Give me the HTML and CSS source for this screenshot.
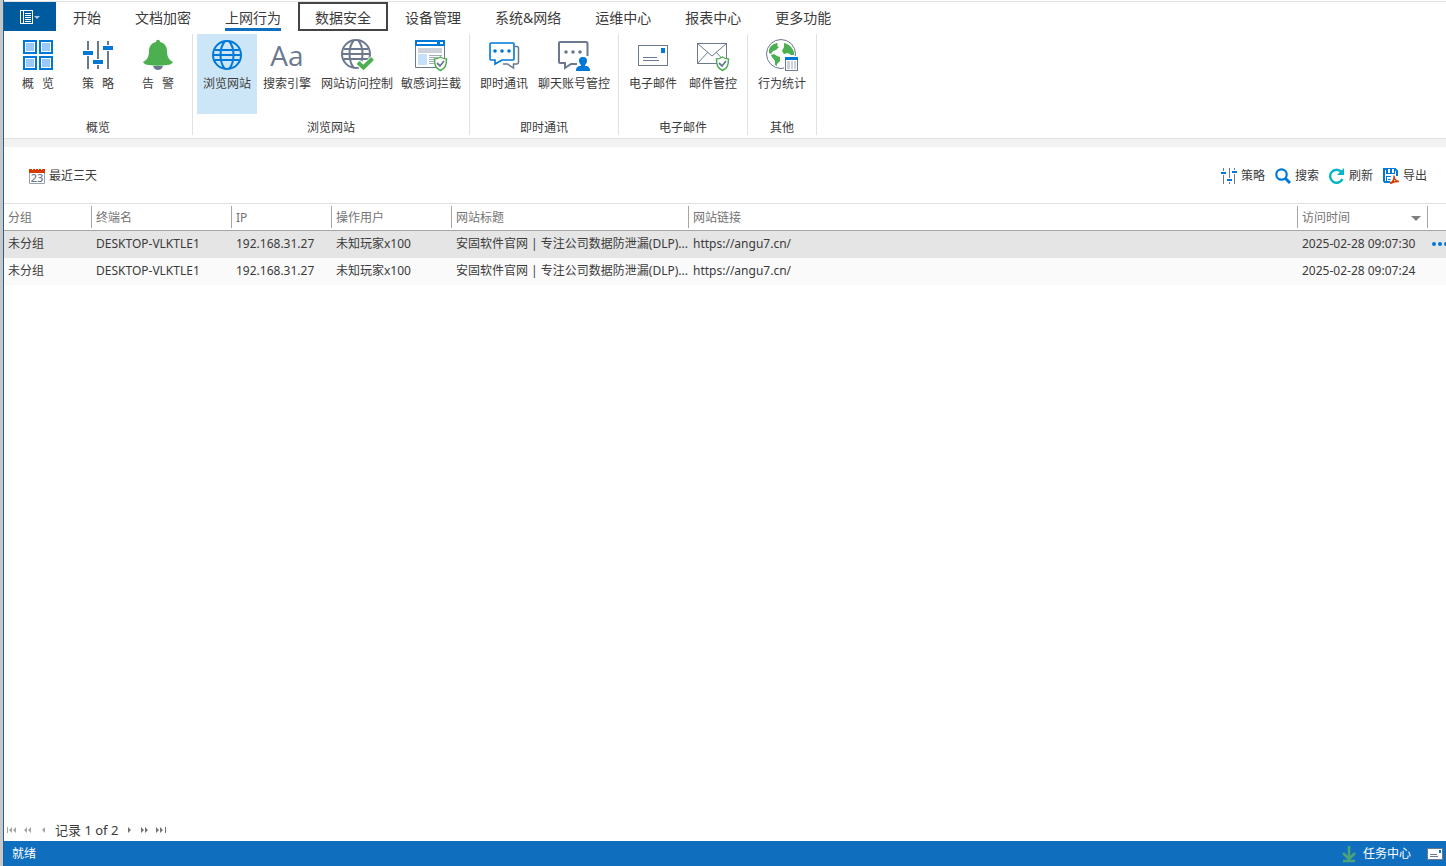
FILE: index.html
```html
<!DOCTYPE html>
<html lang="zh-CN">
<head>
<meta charset="UTF-8">
<meta name="viewport" content="width=device-width, initial-scale=1.0">
<title>上网行为 - 浏览网站</title>
<link rel="stylesheet" href="styles.css">
</head>
<body>
  <div class="app">
    <nav class="tabs">
      <button class="file-btn" aria-label="文件">
        <svg width="22" height="16" viewBox="0 0 22 16">
          <rect x="1.5" y="1.5" width="12" height="13" fill="none" stroke="#fff"/>
          <path d="M4.5 1v14M6 4.5h6M6 6.5h6M6 8.5h6M6 10.5h6M6 12.5h6" stroke="#fff"/>
          <path d="M15 7h6l-3 3z" fill="#a9cbe8"/>
        </svg>
      </button>
      <button class="tab">开始</button>
      <button class="tab">文档加密</button>
      <button class="tab active"><span>上网行为</span></button>
      <button class="tab focused">数据安全</button>
      <button class="tab">设备管理</button>
      <button class="tab">系统&amp;网络</button>
      <button class="tab">运维中心</button>
      <button class="tab">报表中心</button>
      <button class="tab">更多功能</button>
    </nav>

    <div class="ribbon">
      <section class="group">
        <div class="group-items">
          <button class="item">
            <svg width="32" height="32" viewBox="0 0 32 32">
              <g fill="#fff" stroke="#0078d7" stroke-width="2">
                <rect x="2" y="2" width="12" height="12"/><rect x="18" y="2" width="12" height="12"/>
                <rect x="2" y="18" width="12" height="12"/><rect x="18" y="18" width="12" height="12"/>
              </g>
              <path d="M4 4h8v8H4zM20 4h8v8h-8zM4 20h8v8H4zM20 20h8v8h-8z" fill="#99c9ff"/>
            </svg>
            <span>概&emsp13;&emsp13;览</span>
          </button>
          <button class="item">
            <svg width="32" height="32" viewBox="0 0 32 32">
              <path d="M6 2v9M6 17v13M16 2v18M16 26v4M26 2v4M26 12v18" stroke="#6b798f" stroke-width="2"/>
              <path d="M1 12h10v4H1zM11 21h10v4H11zM21 7h10v4H21z" fill="#0078d7"/>
            </svg>
            <span>策&emsp13;&emsp13;略</span>
          </button>
          <button class="item">
            <svg width="32" height="32" viewBox="0 0 32 32">
              <path d="M11 27h10c-1 3-3 4-5 4s-4-1-5-4z" fill="#6b798f"/>
              <path d="M14 3c0-3 4-3 4 0 5 1 7 5 7 9 0 6 2 9 6 11-1 2-3 3-6 3-6 1-12 1-18 0-3 0-5-1-6-3 4-2 6-5 6-11 0-4 2-8 7-9z" fill="#4caf50"/>
            </svg>
            <span>告&emsp13;&emsp13;警</span>
          </button>
        </div>
        <h2>概览</h2>
      </section>

      <section class="group">
        <div class="group-items">
          <button class="item selected">
            <svg width="32" height="32" viewBox="0 0 32 32">
              <g fill="none" stroke="#0078d7" stroke-width="2">
                <circle cx="16" cy="16" r="14"/>
                <path d="M14 2C8 9 8 23 14 30M18 2c6 7 6 21 0 28M4 11h24M2 16h28M4 21h24"/>
              </g>
            </svg>
            <span>浏览网站</span>
          </button>
          <button class="item">
            <span class="letters" aria-hidden="true">Aa</span>
            <span>搜索引擎</span>
          </button>
          <button class="item">
            <svg width="32" height="32" viewBox="0 0 32 32">
              <g fill="none" stroke="#6b798f" stroke-width="2">
                <circle cx="15" cy="15" r="14"/>
                <path d="M13 1C7 8 7 22 13 29M17 1c6 7 6 21 0 28M3 10h24M1 15h28M3 20h24"/>
              </g>
              <path d="M18 24l5 5 9-9" fill="none" stroke="#fff" stroke-width="7"/>
              <path d="M17 23.500l5.500 5 9-9" fill="none" stroke="#4caf50" stroke-width="4"/>
            </svg>
            <span>网站访问控制</span>
          </button>
          <button class="item">
            <svg width="32" height="32" viewBox="0 0 32 32">
              <path d="M.5 6v22.500h29V6" fill="#fff" stroke="#6b798f"/>
              <path d="M0 1h30v6H0z" fill="#0078d7"/>
              <path d="M2 3h20v2H2zM25 3h3v2h-3z" fill="#fff"/>
              <path d="M3 9h24v5H3z" fill="#cdd1d9"/>
              <path d="M3 15h9v11H3z" fill="#c4e0fb"/>
              <path d="M14 16.500h13M14 18.500h9M14 20.500h6M14 22.500h5M14 24.500h5" stroke="#a4adba"/>
              <path d="M25.500 18c2 1.500 4 2 6 2 0 6-1 9-6 11.500-5-2.500-6-5.500-6-11.500 2 0 4-.5 6-2z" fill="#fff" stroke="#4caf50" stroke-width="1.500"/>
              <path d="M22 24l3 3 4-5" fill="none" stroke="#6b798f" stroke-width="1.800"/>
            </svg>
            <span>敏感词拦截</span>
          </button>
        </div>
        <h2>浏览网站</h2>
      </section>

      <section class="group">
        <div class="group-items">
          <button class="item">
            <svg width="32" height="32" viewBox="0 0 32 32">
              <path d="M27 7.500h2q1.500 0 1.500 1.500v14q0 2-2 2h-3v4l-6-4H15" fill="none" stroke="#6b798f" stroke-width="1.500"/>
              <path d="M3 4h22q1 0 1 1v15q0 1-1 1H14l-7 4v-4H3q-1 0-1-1V5q0-1 1-1z" fill="#fff" stroke="#0078d7" stroke-width="1.600"/>
              <g fill="#0078d7"><circle cx="7" cy="12" r="1.800"/><circle cx="14" cy="12" r="1.800"/><circle cx="21" cy="12" r="1.800"/></g>
            </svg>
            <span>即时通讯</span>
          </button>
          <button class="item">
            <svg width="32" height="32" viewBox="0 0 32 32">
              <path d="M19 25h-6l-6 4v-5H2q-1 0-1-1V4q0-1 1-1h26q1.500 0 1.500 1.500V17" fill="none" stroke="#6b798f" stroke-width="2"/>
              <g fill="#6b798f"><circle cx="8" cy="13" r="1.800"/><circle cx="15" cy="13" r="1.800"/><circle cx="22" cy="13" r="1.800"/></g>
              <path d="M25 18c6 0 4 7 2 8v1c4 0 5 2 5 5H18c0-3 1-5 5-5v-1c-2-1-4-8 2-8z" fill="#0078d7"/>
            </svg>
            <span>聊天账号管控</span>
          </button>
        </div>
        <h2>即时通讯</h2>
      </section>

      <section class="group">
        <div class="group-items">
          <button class="item">
            <svg width="32" height="32" viewBox="0 0 32 32">
              <rect x="1.500" y="6.500" width="29" height="20" fill="#fff" stroke="#6b798f"/>
              <path d="M24 9h4v5h-4z" fill="#0078d7"/>
              <path d="M6 18.500h14M6 21.500h16" stroke="#6b798f"/>
            </svg>
            <span>电子邮件</span>
          </button>
          <button class="item">
            <svg width="32" height="32" viewBox="0 0 32 32">
              <path d="M.5 4.500h29v20H.5zM.5 4.500L15 17 29.500 4.500M.5 24.500L11 13M29.500 24.500L19 13" fill="none" stroke="#6b798f"/>
              <path d="M25.500 18c2 1.500 4 2 6 2 0 6-1 9-6 11.500-5-2.500-6-5.500-6-11.500 2 0 4-.5 6-2z" fill="#fff" stroke="#4caf50" stroke-width="1.500"/>
              <path d="M22 24l3 3 4-5" fill="none" stroke="#6b798f" stroke-width="1.800"/>
            </svg>
            <span>邮件管控</span>
          </button>
        </div>
        <h2>电子邮件</h2>
      </section>

      <section class="group">
        <div class="group-items">
          <button class="item">
            <svg width="32" height="32" viewBox="0 0 32 32">
              <circle cx="15" cy="15" r="14.500" fill="#fff" stroke="#6b798f"/>
              <path d="M3 11c1-4 4-6 8-7 1 1 1 2 0 3l2 1-3 3-3 1-2 3-2-1zM5 16l3-1 3 2 3 1v4l-3 3v2l-2-1v-4c-1-2-3-3-4-6zM18 4c5 1 8 4 10 9v3l-3 0-3-2-4 1-2-3 2-4z" fill="#4caf50"/>
              <rect x="18" y="17" width="15" height="15" fill="#fff"/>
              <rect x="19.500" y="19.500" width="12" height="12" fill="#fff" stroke="#6b798f"/>
              <path d="M19 18h13v3H19z" fill="#0078d7"/>
              <path d="M21 22h3v8h-3zM25 22h2v8h-2zM28 22h2v8h-2z" fill="#cdd1d9"/>
            </svg>
            <span>行为统计</span>
          </button>
        </div>
        <h2>其他</h2>
      </section>
    </div>

    <main class="content">
      <div class="toolbar">
        <button class="tool">
          <svg width="16" height="16" viewBox="0 0 16 16">
            <path d="M.5 2h15v13.500H.5z" fill="#fff" stroke="#98a2b0"/>
            <path d="M0 1h16v4H0z" fill="#d83b01"/>
            <path d="M3.500 0v2M6.500 0v2M9.500 0v2M12.500 0v2" stroke="#fff"/>
            <text x="8" y="14" class="cal-day">23</text>
          </svg>
          最近三天
        </button>
        <div class="tools">
          <button class="tool">
            <svg width="16" height="16" viewBox="0 0 16 16">
              <path d="M2.500 0v3M2.500 7v9M8.500 0v10M8.500 14v2M13.500 0v2M13.500 6v10" stroke="#6b798f"/>
              <path d="M0 4h5v2H0zM6 11h5v2H6zM11 3h5v2h-5z" fill="#0078d7"/>
            </svg>
            策略
          </button>
          <button class="tool">
            <svg width="16" height="16" viewBox="0 0 16 16">
              <circle cx="6.500" cy="6.500" r="5.200" fill="none" stroke="#0078d7" stroke-width="2.200"/>
              <path d="M10 10l5 5" stroke="#0078d7" stroke-width="3"/>
            </svg>
            搜索
          </button>
          <button class="tool">
            <svg width="16" height="16" viewBox="0 0 16 16">
              <path d="M12.500 4A6.500 6.500 0 1 0 13.500 11" fill="none" stroke="#00b7c3" stroke-width="2.400"/>
              <path d="M15 0v7H8z" fill="#00b7c3"/>
            </svg>
            刷新
          </button>
          <button class="tool">
            <svg width="16" height="16" viewBox="0 0 16 16">
              <path d="M1 1h11l2 2v11H2l-1-1z" fill="#fff" stroke="#0078d7" stroke-width="2"/>
              <path d="M3 0h9v6H3zM3 8h10v1H3zM3 8h1v6H3z" fill="#0078d7"/>
              <path d="M5 1h2v4H5zM9 1h2v4H9z" fill="#fff"/>
              <path d="M5 11h3v1H5z" fill="#0078d7"/>
              <path d="M8 8h8v8H7z" fill="#fff"/>
              <path d="M7 15.500c3-1.500 4.500-4.500 4-8 0 3 1.500 5.500 5 6-3.500-.5-6 .5-9 2z" fill="none" stroke="#d83b01" stroke-width="1.500"/>
            </svg>
            导出
          </button>
        </div>
      </div>

      <table class="grid">
        <colgroup>
          <col class="c-group"><col class="c-host"><col class="c-ip"><col class="c-user"><col class="c-title"><col><col class="c-time"><col class="c-more">
        </colgroup>
        <thead>
          <tr>
            <th>分组</th>
            <th>终端名</th>
            <th>IP</th>
            <th>操作用户</th>
            <th>网站标题</th>
            <th>网站链接</th>
            <th><span class="sorted">访问时间</span></th>
            <th></th>
          </tr>
        </thead>
        <tbody>
          <tr class="current">
            <td>未分组</td>
            <td>DESKTOP-VLKTLE1</td>
            <td>192.168.31.27</td>
            <td>未知玩家x100</td>
            <td>安固软件官网 | 专注公司数据防泄漏(DLP)...</td>
            <td>https://angu7.cn/</td>
            <td>2025-02-28 09:07:30</td>
            <td>
              <button class="more" aria-label="更多">
                <svg width="16" height="4" viewBox="0 0 16 4" fill="#0078d7"><circle cx="2" cy="2" r="2"/><circle cx="8" cy="2" r="2"/><circle cx="14" cy="2" r="2"/></svg>
              </button>
            </td>
          </tr>
          <tr>
            <td>未分组</td>
            <td>DESKTOP-VLKTLE1</td>
            <td>192.168.31.27</td>
            <td>未知玩家x100</td>
            <td>安固软件官网 | 专注公司数据防泄漏(DLP)...</td>
            <td>https://angu7.cn/</td>
            <td>2025-02-28 09:07:24</td>
            <td></td>
          </tr>
        </tbody>
      </table>
    </main>

    <div class="pager">
      <button class="page-btn" aria-label="第一页"><svg width="10" height="6" viewBox="0 0 10 6" fill="#a6a6a6"><path d="M0 0h1v6H0zM5 0v6L2 3zM9 0v6L6 3z"/></svg></button>
      <button class="page-btn" aria-label="上一页"><svg width="10" height="6" viewBox="0 0 10 6" fill="#a6a6a6"><path d="M4 0v6L1 3zM8 0v6L5 3z"/></svg></button>
      <button class="page-btn" aria-label="上一条"><svg width="10" height="6" viewBox="0 0 10 6" fill="#a6a6a6"><path d="M6 0v6L3 3z"/></svg></button>
      <span class="page-text">记录 1 of 2</span>
      <button class="page-btn" aria-label="下一条"><svg width="10" height="6" viewBox="0 0 10 6" fill="#737373"><path d="M4 0v6l3-3z"/></svg></button>
      <button class="page-btn" aria-label="下一页"><svg width="10" height="6" viewBox="0 0 10 6" fill="#737373"><path d="M1 0v6l3-3zM5 0v6l3-3z"/></svg></button>
      <button class="page-btn" aria-label="最后一页"><svg width="10" height="6" viewBox="0 0 10 6" fill="#737373"><path d="M0 0v6l3-3zM4 0v6l3-3zM9 0h1v6H9z"/></svg></button>
    </div>

    <footer class="status">
      <span>就绪</span>
      <div class="status-right">
        <button class="status-btn">
          <svg width="16" height="16" viewBox="0 0 16 16"><path d="M8 0v13M2 7l6 6 6-6M2 15h12" fill="none" stroke="#4da375" stroke-width="2.500"/></svg>
          任务中心
        </button>
        <button class="status-btn" aria-label="消息">
          <svg width="16" height="12" viewBox="0 0 16 12"><path d="M.5.5h15v11H.5z" fill="#fff" stroke="#6b798f"/><path d="M12 2h2v3h-2z" fill="#0078d7"/><path d="M3 6.500h7M3 8.500h8" stroke="#6b798f"/></svg>
        </button>
      </div>
    </footer>
  </div>
</body>
</html>
```
FILE: styles.css
```css
* {
  box-sizing: border-box;
}
body {
  margin: 0;
  padding-left: 3px;
  background: #c8c8c8;
  color: #3b3b3b;
  font-family: "Noto Sans", "Noto Sans CJK SC", sans-serif;
  font-size: 12px;
  line-height: 16px;
}
button {
  margin: 0;
  padding: 0;
  border: none;
  background: none;
  color: inherit;
  font: inherit;
  cursor: pointer;
}
svg {
  display: block;
  flex: none;
  overflow: visible;
}
.app {
  display: flex;
  flex-direction: column;
  min-height: 100vh;
  padding-top: 1px;
  border-left: 1px solid #1e6296;
  background: #fff;
}

/* 顶部标签 */
.tabs {
  display: flex;
  height: 30px;
  border-top: 1px solid #e1e1e1;
}
.file-btn {
  display: flex;
  align-items: center;
  justify-content: center;
  width: 52px;
  background: #005a9e;
}
.tab {
  padding: 2px 17px 0;
  font-size: 14px;
  line-height: 27px;
  white-space: nowrap;
}
.tab.active span {
  display: block;
  height: 27px;
  border-bottom: 3px solid #106ebe;
}
.tab.focused {
  padding: 2px 15px 0;
  border: 2px solid #444;
  line-height: 23px;
}

/* 功能区 */
.ribbon {
  display: flex;
  height: 108px;
  padding: 3px 0;
  border-bottom: 1px solid #e1e1e1;
}
.group {
  display: flex;
  flex-direction: column;
  padding: 0 4px;
  border-right: 1px solid #e1e1e1;
}
.group h2 {
  margin: 6px 0 0;
  font-size: 12px;
  font-weight: normal;
  line-height: 16px;
  text-align: center;
}
.group-items {
  display: flex;
}
.item {
  display: flex;
  flex-direction: column;
  align-items: center;
  gap: 5px;
  min-width: 60px;
  height: 80px;
  padding: 5px 4px 0;
  white-space: nowrap;
}
.item.selected {
  background: #cde6f7;
}
.letters {
  height: 32px;
  color: #6b798f;
  font-family: "Open Sans", sans-serif;
  font-size: 28px;
  line-height: 32px;
}

/* 内容 */
.content {
  flex: 1;
  border-top: 8px solid #f2f2f2;
}
.toolbar {
  display: flex;
  align-items: center;
  justify-content: space-between;
  height: 57px;
  padding: 2px 19px 0 25px;
  border-bottom: 1px solid #e1e1e1;
}
.tools {
  display: flex;
  gap: 10px;
}
.tool {
  display: flex;
  align-items: center;
  gap: 4px;
}
.cal-day {
  fill: #6b798f;
  font-size: 11px;
  font-weight: 500;
  text-anchor: middle;
}
.grid {
  width: 100%;
  border-collapse: separate;
  border-spacing: 0;
  table-layout: fixed;
}
.c-group { width: 88px; }
.c-host { width: 140px; }
.c-ip { width: 100px; }
.c-user { width: 120px; }
.c-title { width: 237px; }
.c-time { width: 130px; }
.c-more { width: 18px; }
.grid th,
.grid td {
  height: 27px;
  padding: 0 0 2px 4px;
  overflow: hidden;
  text-align: left;
  white-space: nowrap;
}
.grid th {
  padding: 2px 0 0 4px;
  border-bottom: 1px solid #a6a6a6;
  background: linear-gradient(#a6a6a6, #a6a6a6) right center / 1px 22px no-repeat;
  color: #737373;
  font-weight: normal;
}
.grid td {
  background: #fafafa;
}
.grid .current td {
  background: #e5e5e5;
}
.grid th:last-child {
  background: none;
}
.sorted {
  display: flex;
  align-items: center;
  justify-content: space-between;
  padding-right: 7px;
}
.sorted::after {
  content: "";
  border: 5px solid transparent;
  border-top-color: #808080;
  border-bottom: none;
}
.more {
  display: block;
}

/* 翻页 */
.pager {
  display: flex;
  align-items: center;
  gap: 6px;
  height: 22px;
  padding-left: 3px;
}
.page-text {
  font-size: 13px;
}

/* 状态栏 */
.status {
  display: flex;
  align-items: center;
  justify-content: space-between;
  height: 25px;
  padding: 0 3px 0 8px;
  background: #106ebe;
  color: #fff;
}
.status-right,
.status-btn {
  display: flex;
  align-items: center;
}
.status-right {
  gap: 16px;
}
.status-btn {
  gap: 6px;
}
```
